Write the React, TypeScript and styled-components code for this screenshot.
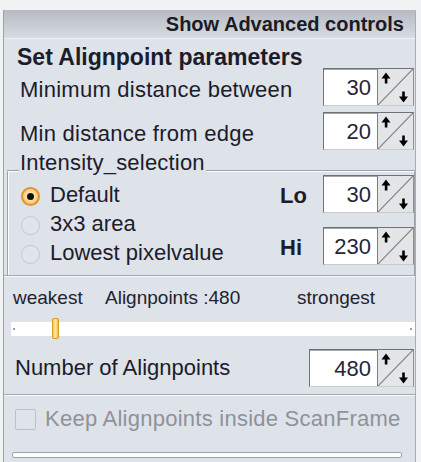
import React from 'react';
import styled, { createGlobalStyle } from 'styled-components';

const Global = createGlobalStyle`
  html, body {
    margin: 0;
    padding: 0;
    background: #f1f2f4;
    overflow: hidden;
  }
  body {
    font-family: "Liberation Sans", Arial, sans-serif;
    color: #1c1c2a;
  }
`;

const Panel = styled.div`
  margin: 10px 0 0 3px;
  width: 413px;
  height: 452px;
  box-sizing: border-box;
  border-left: 1px solid #9ca1a9;
  border-right: 1px solid #a9aeb6;
  background: #dee2e9;
  display: flex;
  flex-direction: column;
`;

const Header = styled.div`
  height: 28px;
  background: linear-gradient(#b6bac2, #d8dbe1);
  border-bottom: 1px solid #eef0f3;
  display: flex;
  justify-content: flex-end;
  padding-right: 11px;
  font-weight: bold;
  font-size: 20px;
  line-height: 28px;
  color: #1b1b26;
`;

const Title = styled.div`
  padding: 7px 0 0 13px;
  font-weight: bold;
  font-size: 23px;
  line-height: 22px;
`;

const Row = styled.div<{ $top?: number; $left?: number }>`
  height: 38px;
  margin-top: ${p => p.$top ?? 0}px;
  padding: 0 1px 0 ${p => p.$left ?? 16}px;
  display: flex;
  align-items: center;
  justify-content: space-between;
`;

const Label = styled.span<{ $shift?: number; $spacing?: number }>`
  font-size: 22px;
  line-height: 26px;
  letter-spacing: ${p => p.$spacing ?? 0.25}px;
  padding-top: ${p => p.$shift ?? 0}px;
`;

const Spin = styled.div`
  display: flex;
  height: 38px;
  box-sizing: border-box;
  border: 1px solid #6f7174;
  border-right-color: #8d8f92;
  border-bottom-color: #c9cbce;
  background: #fff;
`;

const Field = styled.div<{ $w: number }>`
  width: ${p => p.$w}px;
  box-sizing: border-box;
  padding-right: 6px;
  text-align: right;
  font-size: 22px;
  line-height: 36px;
  color: #26263c;
  border-top: 1px solid #a3a5a8;
`;

const SpinButton = styled.svg`
  display: block;
  width: 36px;
  height: 36px;
  background: #e4e5e7;
  border-left: 1px solid #7b7d80;
  box-sizing: border-box;
`;

const Spinner = ({ value, width = 53 }: { value: string; width?: number }) => (
  <Spin>
    <Field $w={width}>{value}</Field>
    <SpinButton viewBox="0 0 35 36">
      <line x1="0" y1="36" x2="35" y2="0" stroke="#7e8084" strokeWidth="1.2" />
      <polygon points="3.5,9.5 8,3.5 12.5,9.5" fill="#000" />
      <rect x="6.8" y="8" width="2.6" height="6.5" fill="#000" />
      <rect x="24.2" y="22.5" width="2.6" height="6.5" fill="#000" />
      <polygon points="21,27.5 25.5,33.5 30,27.5" fill="#000" />
    </SpinButton>
  </Spin>
);

const Group = styled.div`
  margin: 1px 0 0 3px;
  display: flex;
  flex-direction: column;
`;

const GroupHead = styled.div`
  height: 21px;
  display: flex;
  align-items: flex-end;
`;

const EdgeLine = styled.div<{ $w?: number; $corner?: 'left' | 'right' }>`
  ${p => (p.$w ? `width: ${p.$w}px;` : 'flex: 1;')}
  height: 2px;
  box-sizing: border-box;
  border-top: 1px solid #9ca1a9;
  border-bottom: 1px solid #fbfcfd;
  ${p => (p.$corner === 'left' ? 'border-left: 1px solid #9ca1a9;' : '')}
  ${p => (p.$corner === 'right' ? 'border-right: 1px solid #9ca1a9;' : '')}
`;

const GroupLegend = styled.span`
  font-size: 22px;
  line-height: 18px;
  letter-spacing: 0.2px;
  padding: 0 1px;
`;

const GroupBody = styled.div`
  height: 103px;
  box-sizing: border-box;
  border-left: 1px solid #9ca1a9;
  border-right: 1px solid #9ca1a9;
  box-shadow: inset 1px 0 #fbfcfd;
  display: flex;
  justify-content: space-between;
`;

const RadioList = styled.div`
  padding: 10px 0 0 13px;
  display: flex;
  flex-direction: column;
`;

const RadioRow = styled.div`
  height: 29px;
  display: flex;
  align-items: center;
  gap: 10px;
`;

const RadioDot = styled.span<{ $on?: boolean }>`
  width: 19px;
  height: 19px;
  box-sizing: border-box;
  border-radius: 50%;
  display: flex;
  align-items: center;
  justify-content: center;
  ${p =>
    p.$on
      ? `border: 2px solid #e0952c;
         background: radial-gradient(circle at 50% 45%, #fff3d6 0%, #fbd486 55%, #f2ae4a 100%);`
      : `border: 1px solid #c4c8ce;
         background: #e1e4ea;`}
  &::after {
    content: '';
    width: 7px;
    height: 7px;
    border-radius: 50%;
    background: #111;
    display: ${p => (p.$on ? 'block' : 'none')};
  }
`;

const RadioText = styled.span`
  font-size: 22px;
  line-height: 22px;
  padding-bottom: 3px;
`;

const LevelCol = styled.div`
  padding-top: 3px;
  display: flex;
  flex-direction: column;
  gap: 14px;
`;

const LevelRow = styled.div`
  display: flex;
  align-items: center;
`;

const LevelLabel = styled.span`
  width: 43px;
  font-weight: bold;
  font-size: 22px;
  line-height: 26px;
  padding-top: 4px;
`;

const Separator = styled.div<{ $top?: number }>`
  margin-top: ${p => p.$top ?? 0}px;
  height: 2px;
  box-sizing: border-box;
  border-top: 1px solid #a3a8b0;
  border-bottom: 1px solid #f7f8fa;
`;

const ScaleLabels = styled.div`
  padding: 11px 0 0 9px;
  display: grid;
  grid-template-columns: 92px 192px auto;
  font-size: 19px;
  line-height: 20px;
  color: #222230;
`;

const Track = styled.div`
  position: relative;
  margin: 13px 0 0 7px;
  height: 15px;
  background: #fff;
  border-top: 1px solid #e2e4e8;
  box-sizing: border-box;
  &::before,
  &::after {
    content: '';
    position: absolute;
    top: 6px;
    width: 2px;
    height: 2px;
    background: #9a9ea5;
  }
  &::before {
    left: 2px;
  }
  &::after {
    right: 3px;
  }
`;

const Thumb = styled.div`
  position: absolute;
  left: 41px;
  top: -4px;
  width: 7px;
  height: 21px;
  box-sizing: border-box;
  border: 1px solid #d79a24;
  border-radius: 2px;
  background: linear-gradient(90deg, #f6c94e, #fde9a2 50%, #f3c040);
`;

const CheckRow = styled.div`
  margin-top: 12px;
  padding-left: 11px;
  height: 22px;
  display: flex;
  align-items: center;
  gap: 9px;
`;

const CheckBox = styled.span`
  width: 21px;
  height: 21px;
  box-sizing: border-box;
  border: 1px solid #bcc0c7;
  border-radius: 2px;
  background: #dfe3ea;
`;

const CheckText = styled.span`
  font-size: 22px;
  line-height: 22px;
  letter-spacing: 0.25px;
  color: #8e9299;
`;

const BottomBar = styled.div`
  margin: 22px 0 0 8px;
  width: 390px;
  height: 6px;
  box-sizing: border-box;
  border: 1px solid #9ea3aa;
  border-radius: 2px;
  background: #fff;
`;

export default function App() {
  return (
    <>
      <Global />
      <Panel>
        <Header>Show Advanced controls</Header>
        <Title>Set Alignpoint parameters</Title>
        <Row>
          <Label $shift={6}>Minimum distance between</Label>
          <Spinner value="30" />
        </Row>
        <Row $top={6}>
          <Label $shift={6}>Min distance from edge</Label>
          <Spinner value="20" />
        </Row>
        <Group>
          <GroupHead>
            <EdgeLine $w={12} $corner="left" />
            <GroupLegend>Intensity_selection</GroupLegend>
            <EdgeLine $corner="right" />
          </GroupHead>
          <GroupBody>
            <RadioList>
              <RadioRow>
                <RadioDot $on />
                <RadioText>Default</RadioText>
              </RadioRow>
              <RadioRow>
                <RadioDot />
                <RadioText>3x3 area</RadioText>
              </RadioRow>
              <RadioRow>
                <RadioDot />
                <RadioText>Lowest pixelvalue</RadioText>
              </RadioRow>
            </RadioList>
            <LevelCol>
              <LevelRow>
                <LevelLabel>Lo</LevelLabel>
                <Spinner value="30" />
              </LevelRow>
              <LevelRow>
                <LevelLabel>Hi</LevelLabel>
                <Spinner value="230" />
              </LevelRow>
            </LevelCol>
          </GroupBody>
        </Group>
        <Separator />
        <ScaleLabels>
          <span>weakest</span>
          <span>Alignpoints :480</span>
          <span>strongest</span>
        </ScaleLabels>
        <Track>
          <Thumb />
        </Track>
        <Row $top={13} $left={11}>
          <Label $spacing={0}>Number of Alignpoints</Label>
          <Spinner value="480" width={67} />
        </Row>
        <Separator $top={7} />
        <CheckRow>
          <CheckBox />
          <CheckText>Keep Alignpoints inside ScanFrame</CheckText>
        </CheckRow>
        <BottomBar />
      </Panel>
    </>
  );
}
